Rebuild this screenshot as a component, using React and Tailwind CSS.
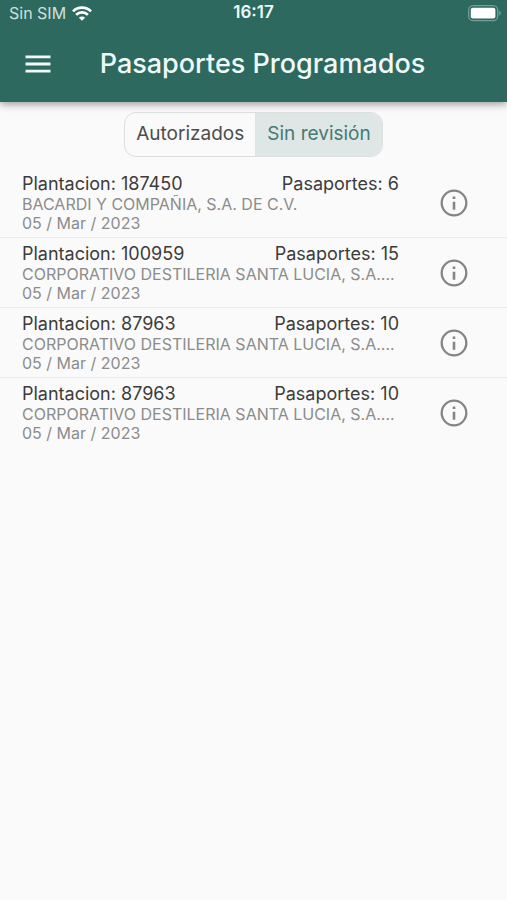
import { useState } from "react";

const client = "CORPORATIVO DESTILERIA SANTA LUCIA, S.A....";

const rows = [
  { id: 1, plantation: "187450", passports: 6, company: "BACARDI Y COMPAÑIA, S.A. DE C.V.", date: "05 / Mar / 2023" },
  { id: 2, plantation: "100959", passports: 15, company: client, date: "05 / Mar / 2023" },
  { id: 3, plantation: "87963", passports: 10, company: client, date: "05 / Mar / 2023" },
  { id: 4, plantation: "87963", passports: 10, company: client, date: "05 / Mar / 2023" },
];

function WifiIcon() {
  return (
    <svg width="20" height="15" viewBox="0 0 20 15" fill="none" stroke="currentColor" strokeWidth="2.7" aria-hidden="true">
      <path d="M1 5.4a12.8 12.8 0 0 1 18 0" />
      <path d="M4.1 8.9a8.3 8.3 0 0 1 11.8 0" />
      <path d="M10 14.8 6.9 11.7a4.4 4.4 0 0 1 6.2 0Z" fill="currentColor" stroke="none" />
    </svg>
  );
}

function BatteryIcon() {
  return (
    <svg width="34" height="17" viewBox="0 0 34 17" aria-hidden="true">
      <rect x="0.7" y="0.7" width="29" height="15" rx="4.5" fill="none" stroke="#fff" strokeOpacity="0.35" strokeWidth="1.3" />
      <rect x="2.8" y="2.8" width="24.6" height="10.8" rx="2" fill="#fff" />
      <path d="M31.2 5.6c1.8.8 1.8 4.4 0 5.2Z" fill="#fff" fillOpacity="0.4" />
    </svg>
  );
}

function MenuIcon() {
  return (
    <svg width="26" height="18" viewBox="0 0 26 18" fill="currentColor" aria-hidden="true">
      <path d="M0.5 0.5h25v2.8h-25zM0.5 7.6h25v2.800h-25zM0.5 14.700h25v2.800h-25z" />
    </svg>
  );
}

function InfoIcon() {
  return (
    <svg width="28" height="28" viewBox="0 0 28 28" fill="none" aria-hidden="true">
      <circle cx="14" cy="14" r="12.3" stroke="currentColor" strokeWidth="2.3" />
      <path d="M12.7 12.7h2.6v8h-2.6zM12.7 7.500h2.600v2.600h-2.600z" fill="currentColor" />
    </svg>
  );
}

export default function App() {
  const [tab, setTab] = useState("review");
  const tabClass = (name) =>
    tab === name ? "bg-[#dfe7e6] text-[#457a70]" : "text-[#4d4d4d]";

  return (
    <div className="min-h-screen bg-[#fafafa] font-['Inter',sans-serif] text-[#3c3c3c]">
      <header className="bg-[#2d695f] text-[#effaf8] shadow-[0_2px_8px_rgba(0,0,0,0.4)]">
        <div className="grid h-[26px] grid-cols-3 items-center px-[5px]">
          <div className="flex items-center gap-[6px] pl-1 text-base text-[#cde0dc]">
            <span>Sin SIM</span>
            <span className="text-white"><WifiIcon /></span>
          </div>
          <span className="text-center text-[17px] font-semibold">16:17</span>
          <div className="flex justify-end"><BatteryIcon /></div>
        </div>
        <div className="grid h-[76px] grid-cols-[76px_1fr_58px] items-center">
          <button type="button" aria-label="Menu" className="flex h-12 items-center justify-center"><MenuIcon /></button>
          <h1 className="text-center text-[27px] leading-8 font-medium whitespace-nowrap">Pasaportes Programados</h1>
        </div>
      </header>

      <main>
        <div className="flex justify-center pt-[10px] pb-[11px]">
          <div className="flex h-[45px] overflow-hidden rounded-xl border border-[#dbdfde] text-[19px]">
            <button type="button" aria-pressed={tab === "authorized"} onClick={() => setTab("authorized")} className={`border-r border-[#dfe3e2] px-[11px] ${tabClass("authorized")}`}>
              Autorizados
            </button>
            <button type="button" aria-pressed={tab === "review"} onClick={() => setTab("review")} className={`px-[11px] ${tabClass("review")}`}>
              Sin revisión
            </button>
          </div>
        </div>

        <ul className="divide-y divide-[#ebebeb]">
          {rows.map((row) => (
            <li key={row.id} className="flex h-[70px] items-center pl-[22px]">
              <div className="min-w-0 flex-1">
                <div className="flex justify-between text-lg leading-[22px]">
                  <span>Plantacion: {row.plantation}</span>
                  <span>Pasaportes: {row.passports}</span>
                </div>
                <p className="truncate text-base leading-[19px] text-[#8c8c8c]">{row.company}</p>
                <p className="text-base leading-[19px] text-[#8c8c8c]">{row.date}</p>
              </div>
              <button type="button" aria-label="Ver información" className="flex h-12 w-[108px] items-center justify-center pl-0.5 text-[#858585]">
                <InfoIcon />
              </button>
            </li>
          ))}
        </ul>
      </main>
    </div>
  );
}
